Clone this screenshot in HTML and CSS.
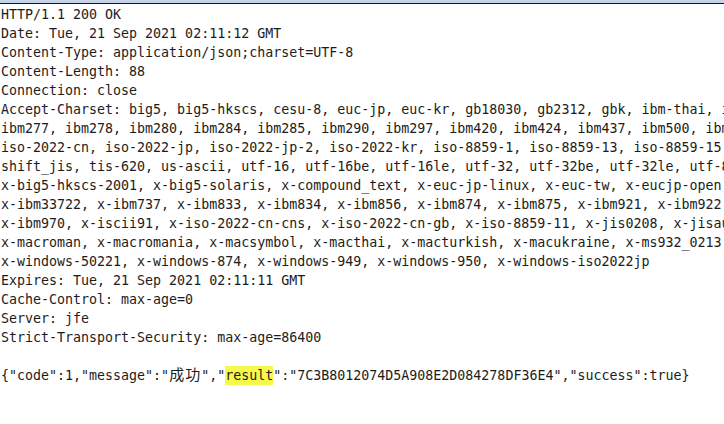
FILE: index.html
```html
<!DOCTYPE html>
<html lang="en">
<head>
<meta charset="UTF-8">
<title>HTTP Response</title>
<link rel="stylesheet" href="styles.css">
</head>
<body>
<div class="topbar"></div>
<pre class="response">HTTP/1.1 200 OK
Date: Tue, 21 Sep 2021 02:11:12 GMT
Content-Type: application/json;charset=UTF-8
Content-Length: 88
Connection: close
Accept-Charset: big5, big5-hkscs, cesu-8, euc-jp, euc-kr, gb18030, gb2312, gbk, ibm-thai, ibm00858, ibm01140, ibm01141
ibm277, ibm278, ibm280, ibm284, ibm285, ibm290, ibm297, ibm420, ibm424, ibm437, ibm500, ibm775, ibm850, ibm852
iso-2022-cn, iso-2022-jp, iso-2022-jp-2, iso-2022-kr, iso-8859-1, iso-8859-13, iso-8859-15, iso-8859-2, iso-8859-3
shift_jis, tis-620, us-ascii, utf-16, utf-16be, utf-16le, utf-32, utf-32be, utf-32le, utf-8, windows-1250
x-big5-hkscs-2001, x-big5-solaris, x-compound_text, x-euc-jp-linux, x-euc-tw, x-eucjp-open, x-ibm1006, x-ibm1025
x-ibm33722, x-ibm737, x-ibm833, x-ibm834, x-ibm856, x-ibm874, x-ibm875, x-ibm921, x-ibm922, x-ibm930, x-ibm933
x-ibm970, x-iscii91, x-iso-2022-cn-cns, x-iso-2022-cn-gb, x-iso-8859-11, x-jis0208, x-jisautodetect, x-johab
x-macroman, x-macromania, x-macsymbol, x-macthai, x-macturkish, x-macukraine, x-ms932_0213, x-ms950-hkscs
x-windows-50221, x-windows-874, x-windows-949, x-windows-950, x-windows-iso2022jp
Expires: Tue, 21 Sep 2021 02:11:11 GMT
Cache-Control: max-age=0
Server: jfe
Strict-Transport-Security: max-age=86400

{"code":1,"message":"<span class="cjk">成功</span>","<span class="hl">result</span>":"7C3B8012074D5A908E2D084278DF36E4","success":true}</pre>
</body>
</html>
```

FILE: styles.css
```css
html, body {
  margin: 0;
  padding: 0;
  background: #ffffff;
  overflow: hidden;
}

.topbar {
  height: 3px;
  background: #c4d3e7;
  border-bottom: 1px solid #15151f;
}

.response {
  margin: 0;
  padding: 1px 0 0 1px;
  font-family: "DejaVu Sans Mono", "Liberation Mono", monospace;
  font-size: 13.3px;
  line-height: 19px;
  color: #1c1c1c;
  white-space: pre;
  overflow: hidden;
}

.cjk {
  font-family: "Noto Sans CJK SC", sans-serif;
  font-size: 15px;
  letter-spacing: 1px;
  line-height: 1;
}

.hl {
  display: inline-block;
  vertical-align: top;
  line-height: 19px;
  background: #f8f84a;
}
```
